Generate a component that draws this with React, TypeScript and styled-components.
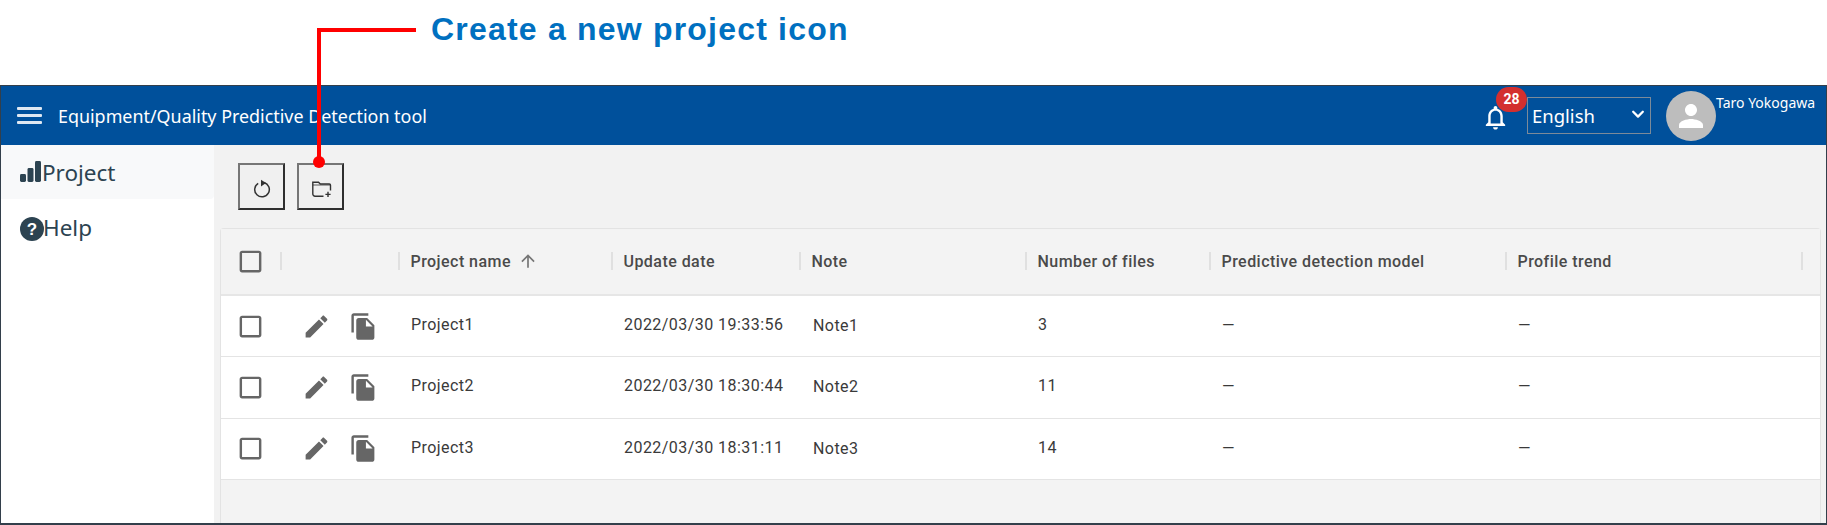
import React from "react";
import styled, { createGlobalStyle } from "styled-components";

const Global = createGlobalStyle`
  html, body { margin: 0; padding: 0; background: #fff; }
  * { box-sizing: border-box; }
`;

const Page = styled.div`
  position: relative;
  width: 1827px;
  height: 525px;
  overflow: hidden;
  display: flex;
  flex-direction: column;
`;
const Callout = styled.div`
  height: 85px;
  flex: none;
  display: flex;
  align-items: center;
  padding: 0 0 0 431px;
  background: #fff;
`;
const CalloutText = styled.div`
  font-family: "Liberation Sans", Arial, sans-serif;
  font-weight: 700;
  font-size: 32px;
  letter-spacing: 1.2px;
  color: #0070c0;
  margin-top: -27px;
`;
const Leader = styled.svg`
  position: absolute;
  left: 0;
  top: 0;
  pointer-events: none;
  z-index: 5;
`;
const Frame = styled.div`
  flex: 1;
  min-height: 0;
  display: flex;
  flex-direction: column;
  border: 1px solid #333f4b;
  border-bottom-width: 2px;
`;
const Header = styled.header`
  height: 59px;
  flex: none;
  display: flex;
  align-items: center;
  background: #00509b;
  color: #fff;
  font-family: "Noto Sans", "Open Sans", sans-serif;
  padding-left: 16px;
`;
const MenuButton = styled.div`
  width: 25px;
  display: flex;
  flex-direction: column;
  gap: 4px;
  margin-right: 16px;
  span { display: block; height: 3px; background: #dfe8f2; border-radius: 1px; }
`;
const AppTitle = styled.div`
  font-size: 17.9px;
  flex: 1;
`;
const Bell = styled.div`
  position: relative;
  width: 29px;
  height: 29px;
  margin: 3px 17px 0 0;
  svg { display: block; }
`;
const Badge = styled.span`
  position: absolute;
  left: 15px;
  top: -16px;
  width: 31px;
  height: 25px;
  border-radius: 13px;
  background: #d32f2f;
  color: #fff;
  font: 700 14px/25px Roboto, sans-serif;
  text-align: center;
`;
const SelectWrap = styled.div`
  position: relative;
  width: 124px;
  height: 37px;
  margin: 0 15px 0 0;
  svg { position: absolute; right: 6px; top: 10px; pointer-events: none; }
`;
const LangSelect = styled.select`
  appearance: none;
  width: 100%;
  height: 100%;
  background: transparent;
  color: #fff;
  border: 1px solid #7c8a99;
  border-radius: 0;
  padding: 0 0 0 4px;
  font: 400 18.5px "Noto Sans", "Open Sans", sans-serif;
  outline: none;
  option { color: #000; }
`;
const Avatar = styled.div`
  width: 50px;
  height: 50px;
  border-radius: 50%;
  background: #bdbdbd;
  display: flex;
  align-items: center;
  justify-content: center;
  margin-top: 1px;
`;
const UserName = styled.div`
  font-size: 14px;
  width: 110px;
  white-space: nowrap;
  align-self: flex-start;
  margin-top: 7px;
`;
const Body = styled.div`
  flex: 1;
  min-height: 0;
  display: flex;
`;
const Sidebar = styled.nav`
  width: 213px;
  flex: none;
  background: #fff;
  font-family: "Noto Sans", "Open Sans", sans-serif;
  color: #2c4351;
`;
const NavItem = styled.div<{ $active?: boolean }>`
  height: 54px;
  display: flex;
  align-items: center;
  padding-left: 18px;
  margin-bottom: ${(p) => (p.$active ? "1px" : "0")};
  font-size: 22.5px;
  border-radius: 0 0 4px 0;
  background: ${(p) => (p.$active ? "#f8f9fa" : "#fff")};
`;
const BarsGlyph = styled.svg`
  margin-right: 1px;
`;
const HelpGlyph = styled.svg`
  margin: 3px -1px 0 1px;
`;
const Main = styled.main`
  flex: 1;
  min-width: 0;
  background: #f2f2f2;
  padding: 18px 5px 0 6px;
  display: flex;
  flex-direction: column;
`;
const Toolbar = styled.div`
  display: flex;
  gap: 12px;
  padding-left: 18px;
  margin-bottom: 18px;
`;
const ToolButton = styled.button`
  width: 47px;
  height: 47px;
  padding: 0;
  display: flex;
  align-items: center;
  justify-content: center;
  background: #f0f0f0;
  border: 2px solid;
  border-color: #767676 #2f2f2f #2f2f2f #767676;
`;
const Table = styled.section`
  flex: 1;
  background: #f3f3f3;
  border: 1px solid #e3e3e3;
  border-bottom: none;
  border-radius: 4px 4px 0 0;
  font-family: Roboto, sans-serif;
`;
const Row = styled.div<{ $head?: boolean }>`
  display: grid;
  grid-template-columns: 59px 118px 213px 188px 226px 184px 296px 296px 1fr;
  height: ${(p) => (p.$head ? "67px" : "61.3px")};
  align-items: center;
  background: ${(p) => (p.$head ? "#f3f3f3" : "#fff")};
  border-bottom: ${(p) => (p.$head ? "2px solid #e6e6e6" : "1px solid #e4e4e4")};
`;
const HeadCell = styled.div`
  display: flex;
  align-items: center;
  gap: 10.5px;
  font-size: 16px;
  font-weight: 500;
  color: #4a4a4a;
  letter-spacing: 0.45px;
  white-space: nowrap;
  padding-bottom: 1px;
`;
const Sep = styled.i`
  display: block;
  width: 2px;
  height: 18px;
  background: #e0e0e0;
  flex: none;
`;
const Cell = styled.div`
  padding: 0 0 3px 13px;
  font-size: 16px;
  color: #3a3a3a;
  letter-spacing: 0.45px;
  white-space: nowrap;
`;
const NoteCell = styled(Cell)`
  padding: 0 0 1px 14px;
`;
const DashCell = styled(Cell)`
  padding-bottom: 1px;
`;
const CheckCell = styled.div`
  display: flex;
  padding-left: 15px;
`;
const ActionCell = styled.div`
  display: flex;
  gap: 18px;
  padding-left: 22px;
`;
const SortIcon = styled.svg`
  margin-left: -3px;
`;

const Icon = ({ d, size = 29, fill = "#666" }: { d: string; size?: number; fill?: string }) => (
  <svg width={size} height={size} viewBox="0 0 24 24" fill={fill}>
    <path d={d} />
  </svg>
);

const CHECK = "M19 5v14H5V5h14m0-2H5c-1.1 0-2 .9-2 2v14c0 1.1.9 2 2 2h14c1.1 0 2-.9 2-2V5c0-1.1-.9-2-2-2z";
const EDIT = "M3 17.25V21h3.75L17.81 9.94l-3.75-3.75L3 17.25zM20.71 7.04c.39-.39.39-1.02 0-1.41l-2.34-2.34c-.39-.39-1.02-.39-1.41 0l-1.83 1.83 3.75 3.75 1.83-1.83z";
const COPY = "M16 1H4c-1.1 0-2 .9-2 2v14h2V3h12V1zm-1 4l6 6v10c0 1.1-.9 2-2 2H7.99C6.89 23 6 22.1 6 21l.01-14c0-1.1.89-2 1.99-2h7zm-1 7h5.5L14 6.5V12z";
const BELL = "M12 22c1.1 0 2-.9 2-2h-4c0 1.1.9 2 2 2zm6-6v-5c0-3.07-1.63-5.64-4.5-6.32V4c0-.83-.67-1.5-1.5-1.5s-1.5.67-1.5 1.5v.68C7.64 5.36 6 7.92 6 11v5l-2 2v1h16v-1l-2-2zm-2 1H8v-6c0-2.48 1.51-4.5 4-4.5s4 2.02 4 4.5v6z";
const PERSON = "M12 12c2.21 0 4-1.79 4-4s-1.79-4-4-4-4 1.79-4 4 1.79 4 4 4zm0 2c-2.67 0-8 1.34-8 4v2h16v-2c0-2.66-5.33-4-8-4z";

const heads = ["", "Project name", "Update date", "Note", "Number of files", "Predictive detection model", "Profile trend", ""];
const rows = [
  ["Project1", "2022/03/30 19:33:56", "Note1", "3"],
  ["Project2", "2022/03/30 18:30:44", "Note2", "11"],
  ["Project3", "2022/03/30 18:31:11", "Note3", "14"],
];

export default function App() {
  return (
    <Page>
      <Global />
      <Callout>
        <CalloutText>Create a new project icon</CalloutText>
      </Callout>
      <Leader width="1827" height="525">
        <path d="M416 30H319V162" fill="none" stroke="#ff0000" strokeWidth="4" />
        <circle cx="319" cy="162" r="6" fill="#ff0000" />
      </Leader>
      <Frame>
        <Header>
          <MenuButton>
            <span />
            <span />
            <span />
          </MenuButton>
          <AppTitle>Equipment/Quality Predictive Detection tool</AppTitle>
          <Bell>
            <Icon d={BELL} fill="#fff" />
            <Badge>28</Badge>
          </Bell>
          <SelectWrap>
            <LangSelect defaultValue="English">
              <option>English</option>
            </LangSelect>
            <svg width="14" height="14" viewBox="0 0 16 16" fill="none" stroke="#fff" strokeWidth="2.6" strokeLinecap="round" strokeLinejoin="round">
              <path d="M2.5 5.5 8 11l5.5-5.5" />
            </svg>
          </SelectWrap>
          <Avatar>
            <Icon d={PERSON} size={36} fill="#fff" />
          </Avatar>
          <UserName>Taro Yokogawa</UserName>
        </Header>
        <Body>
          <Sidebar>
            <NavItem $active>
              <BarsGlyph width="22" height="24" viewBox="0 0 22 24" fill="#2c4351">
                <rect x="1" y="14" width="6" height="8" rx="1.4" />
                <rect x="8.5" y="8" width="6" height="14" rx="1.4" />
                <rect x="16" y="1" width="6" height="21" rx="1.4" />
              </BarsGlyph>
              Project
            </NavItem>
            <NavItem>
              <HelpGlyph width="24" height="24" viewBox="0 0 24 24">
                <circle cx="12" cy="12" r="12" fill="#2c4351" />
                <text x="12" y="18" textAnchor="middle" fontFamily="Liberation Sans, sans-serif" fontWeight="700" fontSize="17" fill="#fff">?</text>
              </HelpGlyph>
              Help
            </NavItem>
          </Sidebar>
          <Main>
            <Toolbar>
              <ToolButton aria-label="Reload">
                <svg width="24" height="24" viewBox="0 0 24 24" fill="none" stroke="#333" strokeWidth="1.5">
                  <path d="M8.2 8.3A7.3 7.3 0 1 0 14 7.5" />
                  <path d="M11 4.8 16 8 11 11.4Z" fill="#333" stroke="none" />
                </svg>
              </ToolButton>
              <ToolButton aria-label="Create a new project">
                <svg width="24" height="24" viewBox="0 0 24 24" fill="none" stroke="#333" strokeWidth="1.4">
                  <path d="M14.5 21.2H6A2.2 2.2 0 0 1 3.8 19V7.2H9.5l1.8 1.8H20.3a1.2 1.2 0 0 1 1.2 1.2V15.5" />
                  <path d="M3.8 10H21.5" strokeWidth="0.8" />
                  <path d="M19 16.8V22M16.4 19.4H21.6" />
                </svg>
              </ToolButton>
            </Toolbar>
            <Table>
              <Row $head>
                <CheckCell>
                  <Icon d={CHECK} />
                </CheckCell>
                {heads.map((h, i) => (
                  <HeadCell key={i}>
                    <Sep />
                    {h}
                    {h === "Project name" && (
                      <SortIcon width="20" height="20" viewBox="0 0 24 24" fill="#757575">
                        <path d="M4 12l1.41 1.41L11 7.83V20h2V7.83l5.58 5.59L20 12l-8-8-8 8z" />
                      </SortIcon>
                    )}
                  </HeadCell>
                ))}
              </Row>
              {rows.map((r) => (
                <Row key={r[0]}>
                  <CheckCell>
                    <Icon d={CHECK} />
                  </CheckCell>
                  <ActionCell>
                    <Icon d={EDIT} />
                    <Icon d={COPY} />
                  </ActionCell>
                  <Cell>{r[0]}</Cell>
                  <Cell>{r[1]}</Cell>
                  <NoteCell>{r[2]}</NoteCell>
                  <Cell>{r[3]}</Cell>
                  <DashCell>—</DashCell>
                  <DashCell>—</DashCell>
                  <Cell />
                </Row>
              ))}
            </Table>
          </Main>
        </Body>
      </Frame>
    </Page>
  );
}
